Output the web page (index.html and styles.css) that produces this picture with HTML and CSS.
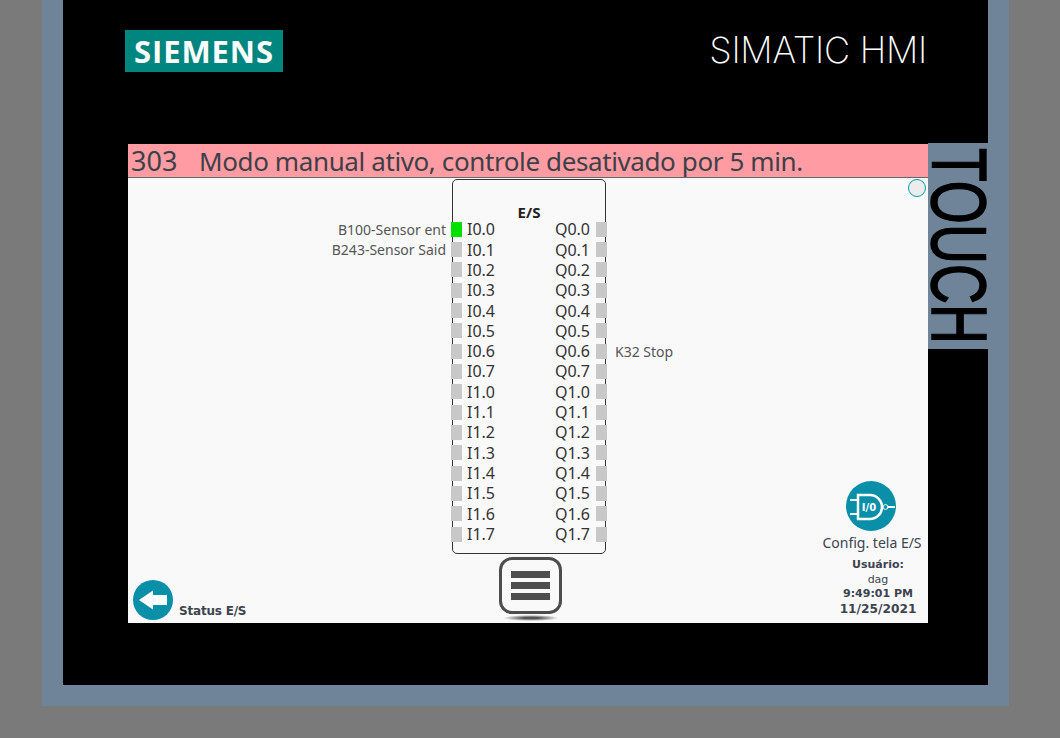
FILE: index.html
```html
<!DOCTYPE html>
<html lang="en">
<head>
    <meta charset="UTF-8">
    <meta name="viewport" content="width=device-width, initial-scale=1.0">
    <title>SIMATIC HMI</title>
    <link rel="stylesheet" href="styles.css">
</head>
<body>
    <div class="frame">
        <div class="panel">
            <div class="head">
                <div class="logo">SIEMENS</div>
                <div class="product">SIMATIC HMI</div>
            </div>
            <div class="middle">
                <div class="screen">
                    <div class="alarm"><span class="alarm-no">303</span><span class="alarm-text">Modo manual ativo, controle desativado por 5 min.</span></div>
                    <div class="work">
                        <div class="col-left">
                            <svg class="back" viewBox="0 0 40 40">
                                <circle cx="20" cy="20" r="20" fill="#0a8fa8"/>
                                <path d="M6 20 L20 10.5 V15 H34 V25 H20 V29.5 Z" fill="#fff"/>
                            </svg>
                            <span class="back-label">Status E/S</span>
                        </div>
                        <div class="col-mid">
                            <div class="block">
                                <div class="block-title">E/S</div>
                                <div class="io-row"><span class="led on"><span class="tag-left">B100-Sensor ent</span></span><span>I0.0</span><span>Q0.0</span><span class="led"></span></div>
                                <div class="io-row"><span class="led"><span class="tag-left">B243-Sensor Said</span></span><span>I0.1</span><span>Q0.1</span><span class="led"></span></div>
                                <div class="io-row"><span class="led"></span><span>I0.2</span><span>Q0.2</span><span class="led"></span></div>
                                <div class="io-row"><span class="led"></span><span>I0.3</span><span>Q0.3</span><span class="led"></span></div>
                                <div class="io-row"><span class="led"></span><span>I0.4</span><span>Q0.4</span><span class="led"></span></div>
                                <div class="io-row"><span class="led"></span><span>I0.5</span><span>Q0.5</span><span class="led"></span></div>
                                <div class="io-row"><span class="led"></span><span>I0.6</span><span>Q0.6</span><span class="led"><span class="tag-right">K32 Stop</span></span></div>
                                <div class="io-row"><span class="led"></span><span>I0.7</span><span>Q0.7</span><span class="led"></span></div>
                                <div class="io-row"><span class="led"></span><span>I1.0</span><span>Q1.0</span><span class="led"></span></div>
                                <div class="io-row"><span class="led"></span><span>I1.1</span><span>Q1.1</span><span class="led"></span></div>
                                <div class="io-row"><span class="led"></span><span>I1.2</span><span>Q1.2</span><span class="led"></span></div>
                                <div class="io-row"><span class="led"></span><span>I1.3</span><span>Q1.3</span><span class="led"></span></div>
                                <div class="io-row"><span class="led"></span><span>I1.4</span><span>Q1.4</span><span class="led"></span></div>
                                <div class="io-row"><span class="led"></span><span>I1.5</span><span>Q1.5</span><span class="led"></span></div>
                                <div class="io-row"><span class="led"></span><span>I1.6</span><span>Q1.6</span><span class="led"></span></div>
                                <div class="io-row"><span class="led"></span><span>I1.7</span><span>Q1.7</span><span class="led"></span></div>
                            </div>
                            <div class="menu-btn">
                                <span></span>
                                <span></span>
                                <span></span>
                            </div>
                            <div class="menu-shadow"></div>
                        </div>
                        <div class="col-right">
                            <div class="dot"></div>
                            <div class="config">
                                <svg class="config-icon" viewBox="0 0 50 50">
                                    <circle cx="25" cy="25" r="25" fill="#0a8fa8"/>
                                    <path d="M4 19 H12 M4 33 H12 M41 26 H49" stroke="#fff" stroke-width="2" fill="none"/>
                                    <path d="M12 14 H24 A12 12 0 0 1 24 38 H12 Z" fill="none" stroke="#fff" stroke-width="2.5"/>
                                    <circle cx="39.5" cy="26" r="2.4" fill="#0a8fa8" stroke="#fff" stroke-width="1"/>
                                    <text x="23" y="30" class="gate-text">I/0</text>
                                </svg>
                                <div class="config-label">Config. tela E/S</div>
                            </div>
                            <div class="status">
                                <div class="b">Usuário:</div>
                                <div class="user">dag</div>
                                <div class="b">9:49:01 PM</div>
                                <div class="b date">11/25/2021</div>
                            </div>
                        </div>
                    </div>
                </div>
                <div class="touch">
                    <svg class="touch-svg" width="60" height="206" viewBox="0 0 60 206">
                        <text transform="translate(4 5) rotate(90)" x="0" y="0" textLength="196" lengthAdjust="spacingAndGlyphs" class="touch-text">TOUCH</text>
                    </svg>
                </div>
            </div>
        </div>
    </div>
</body>
</html>
```

FILE: styles.css
```css
html,body{margin:0;padding:0;}
body{
    width: 1060px;
    height: 738px;
    overflow: hidden;
    background-color: #7a7a7a;
    font-family: "Noto Sans", sans-serif;
}
.frame{
    width: 925px;
    height: 685px;
    margin-left: 42px;
    border: 21px solid #6f8499;
    border-top: 0;
}
.panel{
    height: 100%;
    background-color: #000;
    padding-left: 65px;
}
.head{
    display: flex;
    justify-content: space-between;
    align-items: flex-start;
    width: 802px;
    height: 144px;
    margin-left: -3px;
}
.logo{
    width: 158px;
    height: 42px;
    margin-top: 30px;
    background-color: #00857f;
    color: #fff;
    font-family: "Open Sans", sans-serif;
    font-weight: 700;
    font-size: 31px;
    line-height: 42px;
    letter-spacing: 0.9px;
    text-align: center;
}
.product{
    margin-top: 26px;
    color: #fff;
    font-family: "Inter", sans-serif;
    font-weight: 200;
    font-size: 36px;
    line-height: 48px;
    letter-spacing: -0.25px;
}
.middle{
    display: flex;
    align-items: flex-start;
}
.screen{
    width: 800px;
    height: 479px;
    background-color: #f9f9f9;
}
.alarm{
    display: flex;
    height: 33px;
    padding-left: 3px;
    background-color: #ff9ca3;
    border-bottom: 1px solid #666;
    color: #3c4148;
    font-size: 26px;
    line-height: 34px;
}
.alarm-no{
    width: 68px;
    font-size: 27px;
}
.alarm-text{
    letter-spacing: -0.39px;
}
.work{
    display: grid;
    grid-template-columns: 324px 154px 322px;
    height: 445px;
}
.col-left{
    display: flex;
    align-items: flex-end;
    padding: 0 0 3px 5px;
}
.back{
    width: 40px;
    height: 40px;
}
.back-label{
    margin-left: 6px;
    margin-bottom: -1px;
    font-family: "DejaVu Sans", sans-serif;
    font-weight: 700;
    font-size: 12px;
    letter-spacing: -0.2px;
    line-height: 20px;
    color: #3c4450;
}
.col-mid{
    padding-top: 1px;
    display: flex;
    flex-direction: column;
    align-items: center;
}
.block{
    box-sizing: border-box;
    width: 154px;
    height: 375px;
    border: 1px solid #333;
    border-radius: 5px;
}
.block-title{
    height: 38.2px;
    padding-top: 22px;
    box-sizing: border-box;
    font-weight: 700;
    font-size: 15px;
    line-height: 20px;
    text-align: center;
    color: #222;
}
.io-row{
    display: grid;
    grid-template-columns: 11px 1fr 1fr 11px;
    align-items: center;
    height: 20.33px;
    margin: 0 -2px;
    font-size: 16px;
    color: #333;
}
.io-row span:nth-child(2){
    padding-left: 5px;
}
.io-row span:nth-child(3){
    padding-right: 6px;
    text-align: right;
}
.led{
    position: relative;
    display: block;
    height: 15px;
    background-color: #c8c8c8;
}
.led.on{
    background-color: #00e000;
}
.tag-left,.tag-right{
    position: absolute;
    top: -1px;
    font-size: 14px;
    line-height: 18px;
    white-space: nowrap;
    color: #555;
}
.tag-left{
    right: 16px;
}
.tag-right{
    left: 19px;
}
.menu-btn{
    box-sizing: border-box;
    display: flex;
    flex-direction: column;
    justify-content: center;
    gap: 4px;
    width: 63px;
    height: 57px;
    margin: 3px 0 0 3px;
    padding: 0 9px;
    border: 3px solid #4d4d4d;
    border-radius: 13px;
}
.menu-btn span{
    height: 7px;
    background-color: #4d4d4d;
}
.menu-shadow{
    width: 56px;
    height: 6px;
    margin: 1px 0 0 3px;
    background: radial-gradient(ellipse at center, #555 20%, rgba(85,85,85,0) 70%);
}
.col-right{
    display: flex;
    flex-direction: column;
    align-items: flex-end;
    padding-top: 1px;
}
.dot{
    box-sizing: border-box;
    width: 18px;
    height: 18px;
    margin-right: 2px;
    border: 1px solid #0a9aa8;
    border-radius: 50%;
    background-color: #ececec;
}
.config{
    display: flex;
    flex-direction: column;
    align-items: center;
    width: 110px;
    margin-top: 284px;
    margin-right: 1px;
}
.config-icon{
    width: 50px;
    height: 50px;
    margin-right: 2px;
}
.gate-text{
    font-family: "DejaVu Sans", sans-serif;
    font-weight: 700;
    font-size: 10px;
    fill: #fff;
    text-anchor: middle;
}
.config-label{
    margin-top: 2px;
    font-size: 14px;
    line-height: 20px;
    color: #3c4450;
    white-space: nowrap;
}
.status{
    width: 100px;
    margin-top: 5px;
    text-align: center;
    font-family: "DejaVu Sans", sans-serif;
    font-size: 11px;
    line-height: 14.7px;
    color: #3c4450;
}
.status .b{
    font-weight: 700;
}
.status .date{
    font-size: 12.2px;
}
.touch{
    width: 60px;
    height: 206px;
    margin-top: -1px;
    background-color: #6f8499;
}
.touch-svg{
    display: block;
    overflow: visible;
}
.touch-text{
    font-family: "Liberation Sans", sans-serif;
    font-size: 78px;
    fill: #000;
    stroke: #000;
    stroke-width: 1.5px;
}
```
